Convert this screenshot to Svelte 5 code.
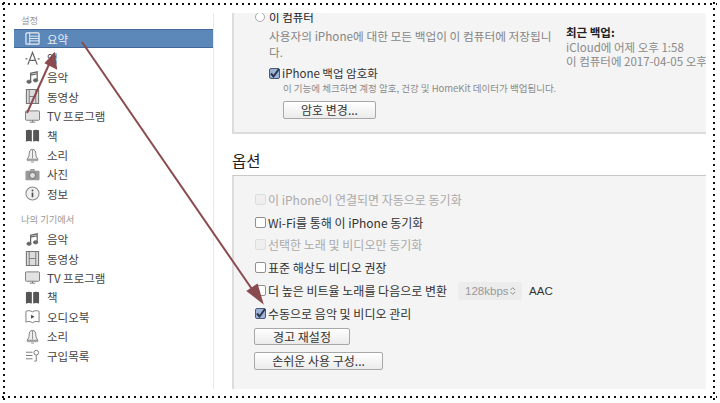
<script>
	const settings = [
		{ icon: 'summary', label: '요약', active: true },
		{ icon: 'apps', label: '앱' },
		{ icon: 'music', label: '음악' },
		{ icon: 'film', label: '동영상' },
		{ icon: 'tv', label: 'TV 프로그램' },
		{ icon: 'book', label: '책' },
		{ icon: 'bell', label: '소리' },
		{ icon: 'camera', label: '사진' },
		{ icon: 'info', label: '정보' }
	];
	const device = [
		{ icon: 'music', label: '음악' },
		{ icon: 'film', label: '동영상' },
		{ icon: 'tv', label: 'TV 프로그램' },
		{ icon: 'book', label: '책' },
		{ icon: 'audiobook', label: '오디오북' },
		{ icon: 'bell', label: '소리' },
		{ icon: 'list', label: '구입목록' }
	];
</script>

{#snippet icon(name)}
	<svg class="icon" viewBox="0 0 16 16" width="15" height="15" fill="none" stroke="currentColor" stroke-width="1">
		{#if name === 'summary'}
			<rect x="1" y="2" width="14" height="12" rx="1" stroke-width="1.3" />
			<path d="M5 2v12M5 5.500h10M5 8h10M5 10.500h10" />
		{:else if name === 'apps'}
			<path d="M3 14.500 8 1.500l5 13" stroke-width="1.300" />
			<path d="M0.500 8.500h2M5 10h6M13.500 8.500h2" stroke-width="1.300" />
		{:else if name === 'music'}
			<path d="M6 12V3.500l7-1.500v8.500M6 5.500l7-1.500" stroke-width="1.300" />
			<ellipse cx="4.300" cy="12.500" rx="2.300" ry="1.700" fill="currentColor" />
			<ellipse cx="11.300" cy="11" rx="2.300" ry="1.700" fill="currentColor" />
		{:else if name === 'film'}
			<rect x="1.500" y="0.500" width="13" height="15" fill="#dcdcdc" stroke="#777" stroke-width="1.200" />
			<path d="M4.500 0.500v15M11.500 0.500v15M4.500 8h7" stroke="#777" />
		{:else if name === 'tv'}
			<rect x="0.500" y="2" width="15" height="10" rx="1" fill="#e2e2e2" stroke="#777" />
			<path d="M5 14h6M8 12v2" stroke="#777" />
		{:else if name === 'book'}
			<path d="M1 2.500C3 1.500 5.500 1.500 7.300 2.500V14.500C5.500 13.500 3 13.500 1 14.500ZM8.700 2.500C10.500 1.500 13 1.500 15 2.500V14.500C13 13.500 10.500 13.500 8.700 14.500Z" fill="#555" stroke="none" />
		{:else if name === 'bell'}
			<path d="M8 1.500c-2.500 0-3.500 2-3.500 4.500 0 3-1 4.500-2.500 6h12c-1.500-1.500-2.500-3-2.500-6 0-2.500-1-4.500-3.500-4.500Z" fill="#f0f0f0" stroke="#777" />
			<path d="M2 13.500h12M6.500 15h3M8 2v9" stroke="#777" stroke-width="0.800" />
		{:else if name === 'camera'}
			<rect x="0.500" y="4" width="15" height="10" rx="1" fill="#999" stroke="none" />
			<path d="M5 4l1-2h4l1 2" fill="#999" stroke="none" />
			<circle cx="8" cy="9" r="3.300" fill="#ddd" stroke="#666" />
		{:else if name === 'info'}
			<circle cx="8" cy="8" r="7" fill="#f0f0f0" stroke="#888" stroke-width="1.100" />
			<circle cx="8" cy="4.800" r="1" fill="#555" stroke="none" />
			<path d="M8 7v5" stroke="#555" stroke-width="1.800" />
		{:else if name === 'audiobook'}
			<path d="M1 2.500C3 1.500 5.500 1.500 8 3c2.500-1.500 5-1.500 7-.5V14c-2-1-4.500-1-7 .5C5.500 13 3 13 1 14Z" stroke="#777" />
			<path d="M6.500 6v4.500l3.500-2.200Z" fill="#444" stroke="none" />
		{:else if name === 'list'}
			<path d="M1 4.500h7M1 8h7M1 11.500h7" stroke="#777" />
			<circle cx="12" cy="5" r="2.500" stroke="#777" />
			<path d="M12 7.500V14h-2" stroke="#777" />
		{/if}
	</svg>
{/snippet}

{#snippet tick()}
	<svg viewBox="0 0 11 11" width="11" height="11">
		<path d="M2 5.500 4.500 8.500 10 1" fill="none" stroke="#2b3550" stroke-width="2" />
	</svg>
{/snippet}

<div class="page">
	<div class="frame">
		<aside class="sidebar">
			<h3>설정</h3>
			{#each settings as item}
				<div class="item" class:active={item.active}>
					{@render icon(item.icon)}
					<span>{item.label}</span>
				</div>
			{/each}
			<h3 class="second">나의 기기에서</h3>
			{#each device as item}
				<div class="item">
					{@render icon(item.icon)}
					<span>{item.label}</span>
				</div>
			{/each}
		</aside>

		<main class="content">
			<section class="panel backup">
				<div class="backup-left">
					<div class="radio-row"><i class="radio"></i><span>이 컴퓨터</span></div>
					<p class="desc">사용자의 iPhone에 대한 모든 백업이 이 컴퓨터에 저장됩니다.</p>
					<label class="check-row encrypt"><i class="box on">{@render tick()}</i><span>iPhone 백업 암호화</span></label>
					<p class="hint">이 기능에 체크하면 계정 암호, 건강 및 HomeKit 데이터가 백업됩니다.</p>
					<button class="change">암호 변경...</button>
				</div>
				<div class="latest">
					<strong>최근 백업:</strong>
					<span>iCloud에 어제 오후 1:58</span>
					<span>이 컴퓨터에 2017-04-05 오후</span>
				</div>
			</section>

			<h2>옵션</h2>

			<section class="panel options">
				<div class="check-row off"><i class="box"></i><span>이 iPhone이 연결되면 자동으로 동기화</span></div>
				<div class="check-row"><i class="box"></i><span>Wi-Fi를 통해 이 iPhone 동기화</span></div>
				<div class="check-row off"><i class="box"></i><span>선택한 노래 및 비디오만 동기화</span></div>
				<div class="check-row"><i class="box"></i><span>표준 해상도 비디오 권장</span></div>
				<div class="check-row">
					<i class="box"></i><span>더 높은 비트율 노래를 다음으로 변환</span>
					<div class="select">
						128kbps
						<svg viewBox="0 0 8 10" width="8" height="10" fill="none" stroke="#888"><path d="M1.500 4 4 1.500 6.500 4M1.500 6 4 8.500 6.500 6" /></svg>
					</div>
					<span class="aac">AAC</span>
				</div>
				<div class="check-row"><i class="box on">{@render tick()}</i><span>수동으로 음악 및 비디오 관리</span></div>
				<button class="reset">경고 재설정</button>
				<button class="access">손쉬운 사용 구성...</button>
			</section>
		</main>
	</div>

	<!-- annotation arrows drawn over the screenshot -->
	<svg class="arrows" width="720" height="403" viewBox="0 0 720 403">
		<g stroke="#8a4b50" stroke-width="2" fill="#8a4b50">
			<path d="M82 42 256 295" fill="none" />
			<path d="M27 113 51 60" fill="none" />
			<path d="M262 302 248 291 257 285Z" />
			<path d="M54 54 56 68 46 63Z" />
		</g>
	</svg>
</div>

<style>
	:global(body) {
		margin: 0;
		background: #fff;
	}
	.page {
		position: relative;
		width: 720px;
		height: 403px;
		overflow: hidden;
		background: #fff;
		font-family: "Noto Sans CJK KR", "Noto Sans", sans-serif;
		font-size: 11.5px;
		color: #333;
	}
	.frame {
		box-sizing: border-box;
		width: 717px;
		height: 400px;
		display: flex;
		padding: 13px 11px 11px 14px;
		background:
			radial-gradient(circle, #111 1.1px, transparent 1.4px) 0 1px / 6px 6px repeat-x,
			radial-gradient(circle, #111 1.1px, transparent 1.4px) 0 100% / 6px 6px repeat-x,
			radial-gradient(circle, #111 1.1px, transparent 1.4px) 1px 0 / 6px 6px repeat-y,
			radial-gradient(circle, #111 1.1px, transparent 1.4px) 100% 0 / 6px 6px repeat-y;
	}
	.sidebar {
		width: 199px;
		flex: none;
		border-right: 1px solid #e8e8e8;
	}
	h3 {
		margin: 0;
		height: 16px;
		padding-left: 7px;
		font-size: 9.300px;
		font-weight: 400;
		line-height: 14px;
		color: #999;
	}
	h3.second {
		height: 18px;
		margin-top: 8px;
		line-height: 15px;
	}
	.item {
		height: 19.400px;
		display: flex;
		align-items: center;
		gap: 7px;
		padding-left: 11px;
		color: #666;
	}
	.item span {
		color: #444;
	}
	.item.active {
		background: #5c87b9;
		color: #e8eef6;
		box-sizing: border-box;
		border-top: 1px solid #44689a;
		border-bottom: 1px solid #44689a;
	}
	.item.active span {
		color: #e8eef6;
	}
	.icon {
		flex: none;
	}
	.content {
		flex: 1;
		min-width: 0;
		margin-left: 18px;
		display: flex;
		flex-direction: column;
	}
	.panel {
		background: #f4f4f4;
		border-left: 2px solid #dcdcdc;
		box-sizing: border-box;
	}
	.backup {
		height: 121px;
		flex: none;
		overflow: hidden;
		display: flex;
		border-bottom: 2px solid #dcdcdc;
		border-radius: 0 4px 0 0;
	}
	.backup-left {
		width: 332px;
		flex: none;
		box-sizing: border-box;
		padding-left: 21px;
		margin-top: -4px;
	}
	.radio-row {
		display: flex;
		align-items: center;
		gap: 4px;
		height: 16px;
		color: #222;
	}
	.radio {
		box-sizing: border-box;
		width: 10px;
		height: 10px;
		border: 1px solid #aaa;
		border-radius: 50%;
		background: #fff;
	}
	.desc {
		width: 290px;
		margin: 3px 0 0 14px;
		font-size: 11.700px;
		line-height: 15.500px;
		color: #858585;
	}
	.encrypt {
		margin-top: 6px;
		margin-left: 14px;
	}
	.hint {
		margin: 1px 0 0 28px;
		font-size: 9.500px;
		line-height: 13px;
		color: #8a8a8a;
		white-space: nowrap;
	}
	button {
		display: block;
		box-sizing: border-box;
		height: 17.500px;
		padding: 0;
		border: 1px solid #a8a8a8;
		border-radius: 2px;
		background: linear-gradient(#fff, #ebebeb);
		font: inherit;
		font-size: 12px;
		line-height: 14px;
		color: #333;
	}
	.change {
		width: 93px;
		margin: 6px 0 0 28px;
	}
	.latest {
		display: flex;
		flex-direction: column;
		padding-top: 12px;
		line-height: 14px;
		color: #8a8a8a;
		white-space: nowrap;
	}
	.latest strong {
		color: #222;
		margin-bottom: 1px;
	}
	h2 {
		margin: 0;
		height: 41px;
		box-sizing: border-box;
		padding-top: 15px;
		font-size: 15.500px;
		font-weight: 400;
		line-height: 22px;
		color: #222;
	}
	.options {
		flex: 1;
		border-top: 1px solid #c8c8c8;
		padding: 12px 0 0 21px;
		font-size: 12px;
	}
	.check-row {
		display: flex;
		align-items: center;
		gap: 2px;
		height: 22.800px;
		color: #333;
	}
	.encrypt {
		height: 16px;
		font-size: 11.500px;
	}
	.check-row.off {
		color: #aaa;
	}
	.check-row.off .box {
		background: #efefef;
		border-color: #ddd;
	}
	.box {
		box-sizing: border-box;
		width: 11px;
		height: 11px;
		flex: none;
		border: 1px solid #8f8f8f;
		border-radius: 2px;
		background: #fff;
		display: block;
	}
	.box svg {
		display: block;
		margin: -1px;
	}
	.box.on {
		background: #9db4d6;
		border-color: #4b5a78;
	}
	.select {
		box-sizing: border-box;
		width: 64px;
		height: 18px;
		margin-left: 9px;
		padding: 0 6px 0 7px;
		display: flex;
		align-items: center;
		justify-content: space-between;
		background: #ececec;
		border-radius: 3px;
		font-size: 11.500px;
		color: #999;
		font-family: "Liberation Sans", sans-serif;
	}
	.aac {
		margin-left: 5px;
		font-size: 11.500px;
		font-family: "Liberation Sans", sans-serif;
	}
	.reset {
		width: 96px;
		margin: 3px 0 0 -1px;
	}
	.access {
		width: 129px;
		margin: 7px 0 0 -1px;
	}
	.arrows {
		position: absolute;
		left: 0;
		top: 0;
		pointer-events: none;
	}
</style>
